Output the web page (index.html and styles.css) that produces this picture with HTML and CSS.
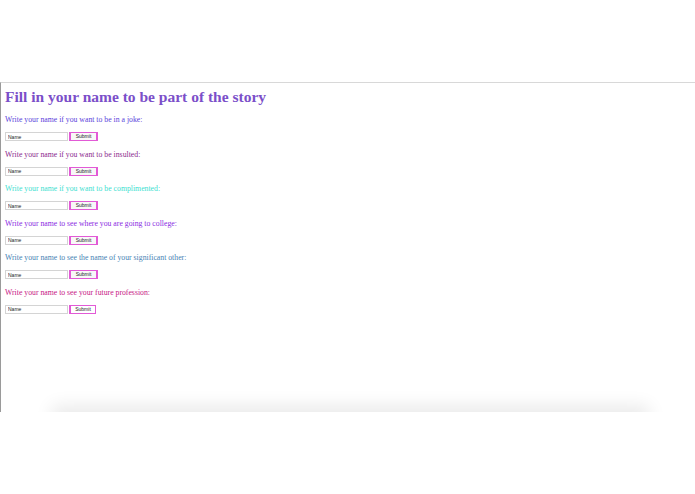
FILE: index.html
```html
<!DOCTYPE html>
<html>
<head>
<meta charset="utf-8">
<link rel="stylesheet" href="styles.css">
</head>
<body>
<div class="spacer"></div>
<div class="frame">
  <h1 class="title">Fill in your name to be part of the story</h1>
  <div class="block">
    <p class="prompt c1">Write your name if you want to be in a joke:</p>
    <form class="row"><input class="name" type="text" placeholder="Name"><button class="submit" type="button">Submit</button></form>
  </div>
  <div class="block">
    <p class="prompt c2">Write your name if you want to be insulted:</p>
    <form class="row"><input class="name" type="text" placeholder="Name"><button class="submit" type="button">Submit</button></form>
  </div>
  <div class="block">
    <p class="prompt c3">Write your name if you want to be complimented:</p>
    <form class="row"><input class="name" type="text" placeholder="Name"><button class="submit" type="button">Submit</button></form>
  </div>
  <div class="block">
    <p class="prompt c4">Write your name to see where you are going to college:</p>
    <form class="row"><input class="name" type="text" placeholder="Name"><button class="submit" type="button">Submit</button></form>
  </div>
  <div class="block">
    <p class="prompt c5">Write your name to see the name of your significant other:</p>
    <form class="row"><input class="name" type="text" placeholder="Name"><button class="submit" type="button">Submit</button></form>
  </div>
  <div class="block">
    <p class="prompt c6">Write your name to see your future profession:</p>
    <form class="row"><input class="name" type="text" placeholder="Name"><button class="submit thin" type="button">Submit</button></form>
  </div>
  <div class="shade"></div>
</div>
</body>
</html>
```
FILE: styles.css
```css
html, body {
  margin: 0;
  padding: 0;
  background: #fff;
}
.spacer {
  height: 82px;
}
.frame {
  position: relative;
  height: 329px;
  border-top: 1px solid #d8d8d8;
  border-left: 1px solid #9a9a9a;
  padding-left: 4px;
  font-family: "Liberation Serif", "Times New Roman", serif;
  overflow: hidden;
}
.shade {
  position: absolute;
  left: 55px;
  right: 50px;
  bottom: -14px;
  height: 14px;
  box-shadow: 0 -2px 18px 4px rgba(0,0,0,0.09);
  background: #fff;
}
.title {
  margin: 4px 0 9px 0;
  font-size: 15.5px;
  line-height: 19px;
  font-weight: bold;
  color: #7b4fc9;
}
.block {
  height: 34.5px;
}
.prompt {
  margin: 0;
  font-size: 7.75px;
  line-height: 9px;
}
.c1 { color: #5b3fdb; }
.c2 { color: #8b2a8e; }
.c3 { color: #40e0d0; }
.c4 { color: #8a2be2; }
.c5 { color: #4682b4; }
.c6 { color: #c71585; }
.row {
  display: flex;
  align-items: center;
  margin: 8px 0 0 0;
}
.name {
  box-sizing: border-box;
  width: 63px;
  height: 9px;
  margin: 0;
  padding: 0 2px;
  border: 1px solid #d4d4d4;
  font-family: "Liberation Sans", Arial, sans-serif;
  font-size: 5px;
  outline: none;
}
.name::placeholder {
  color: #222;
}
.submit {
  box-sizing: border-box;
  width: 29px;
  height: 9px;
  margin: 0 0 0 1px;
  padding: 0;
  border: solid #e25ad6;
  border-width: 1px 2px;
  background: #f8f8f8;
  font-family: "Liberation Sans", Arial, sans-serif;
  font-size: 5px;
  line-height: 7px;
  color: #222;
}
.submit.thin {
  width: 27px;
  border-width: 1px 1px 1px 2px;
  background: #fff;
}
```
